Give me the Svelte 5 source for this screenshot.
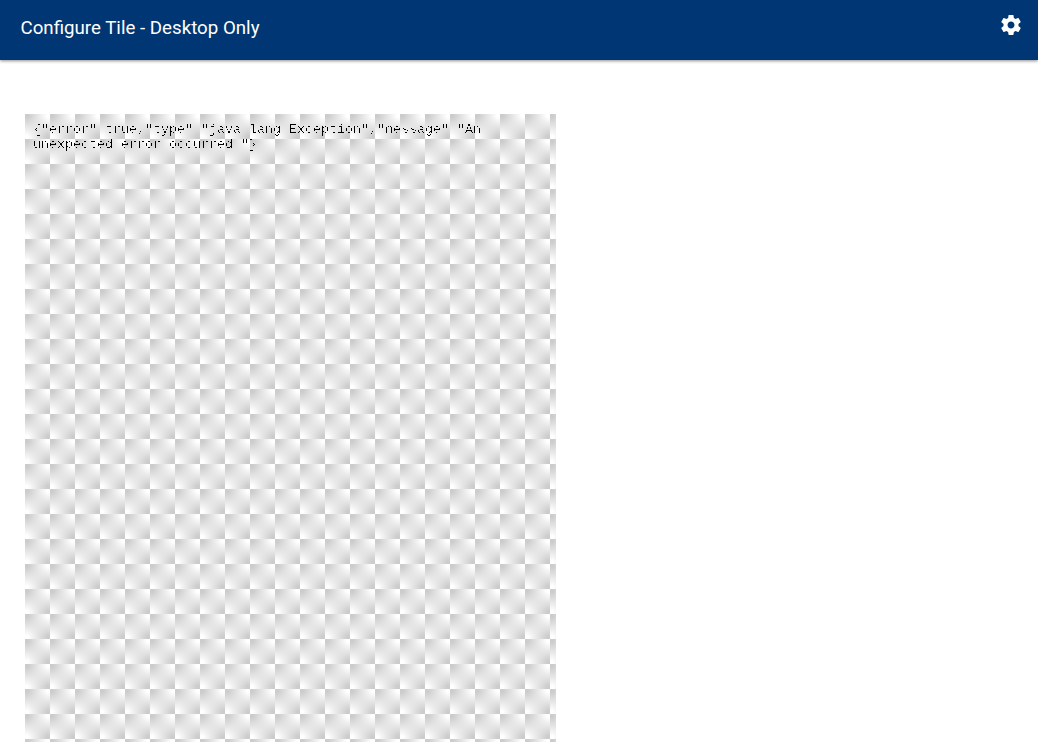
<script>
  const message = '{"error":true,"type":"java.lang.Exception","message":"An unexpected error occurred."}';
</script>

<div class="page">
  <header class="bar">
    <h1 class="title">Configure Tile - Desktop Only</h1>
    <button class="settings" aria-label="Settings">
      <svg viewBox="0 0 24 24" width="24" height="24" aria-hidden="true">
        <path fill="currentColor" d="M19.43 12.98c.04-.32.07-.64.07-.98s-.03-.66-.07-.98l2.11-1.65c.19-.15.24-.42.12-.64l-2-3.46c-.12-.22-.39-.3-.61-.22l-2.49 1c-.52-.4-1.08-.73-1.69-.98l-.38-2.65C14.46 2.18 14.25 2 14 2h-4c-.25 0-.46.18-.49.42l-.38 2.65c-.61.25-1.17.59-1.69.98l-2.49-1c-.23-.09-.49 0-.61.22l-2 3.46c-.13.22-.07.49.12.64l2.11 1.65c-.04.32-.07.65-.07.98s.03.66.07.98l-2.11 1.65c-.19.15-.24.42-.12.64l2 3.46c.12.22.39.3.61.22l2.49-1c.52.4 1.08.73 1.69.98l.38 2.65c.03.24.24.42.49.42h4c.25 0 .46-.18.49-.42l.38-2.65c.61-.25 1.17-.59 1.69-.98l2.49 1c.23.09.49 0 .61-.22l2-3.46c.12-.22.07-.49-.12-.64l-2.11-1.65zM12 15.5c-1.93 0-3.5-1.57-3.5-3.5s1.57-3.5 3.5-3.5 3.5 1.57 3.5 3.5-1.57 3.5-3.5 3.5z"/>
      </svg>
    </button>
  </header>

  <main class="content">
    <section class="tile">
      <svg class="defs" width="0" height="0" aria-hidden="true">
        <filter id="crisp" color-interpolation-filters="sRGB">
          <feComponentTransfer>
            <feFuncA type="discrete" tableValues="0 0 0 1" />
          </feComponentTransfer>
        </filter>
      </svg>
      <pre class="output">{message}</pre>
    </section>
  </main>
</div>

<style>
  :global(body) {
    margin: 0;
    background: #fff;
  }

  .page {
    height: 756px;
    overflow: hidden;
    display: flex;
    flex-direction: column;
  }

  .bar {
    height: 60px;
    flex: none;
    box-sizing: border-box;
    display: flex;
    justify-content: space-between;
    align-items: flex-start;
    padding: 0 15.5px 0 20.5px;
    background: #003673;
    color: #fff;
    box-shadow: 0 1px 3px rgba(0, 0, 0, 0.45);
  }

  .title {
    margin: 0;
    padding-top: 17px;
    font: 400 18.72px/22px Roboto, sans-serif;
  }

  .settings {
    margin: 13px 0 0;
    padding: 0;
    width: 24px;
    height: 24px;
    border: 0;
    background: none;
    color: inherit;
  }

  .settings svg {
    display: block;
  }

  .content {
    padding: 54px 25px 0;
  }

  .tile {
    width: 531px;
    height: 628px;
    box-sizing: border-box;
    padding: 8px;
    background-color: #fff;
    background-image:
      linear-gradient(rgba(255, 255, 255, 0.8), rgba(255, 255, 255, 0.8)),
      linear-gradient(90deg, #000 12%, #fff 88%),
      linear-gradient(180deg, #000 12%, #fff 88%);
    background-size: 25px 25px;
    background-blend-mode: normal, exclusion, normal;
  }

  .defs {
    position: absolute;
  }

  .output {
    margin: 0;
    white-space: pre-wrap;
    font: 400 13.333px/15px "Liberation Mono", monospace;
    color: #000;
    filter: url(#crisp);
  }
</style>
